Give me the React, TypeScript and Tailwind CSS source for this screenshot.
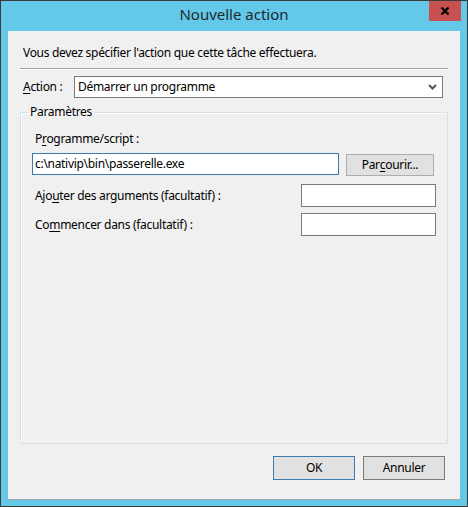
const font = "font-['Noto_Sans',_sans-serif]";

function Key({ children }: { children: string }) {
    return <span className="underline underline-offset-2">{children}</span>;
}

export default function App() {
    return (
        <div
            className={`w-[468px] h-[507px] flex flex-col bg-[#64c8e9] border border-[#3a3a3a] text-[12px] tracking-[-0.3px] text-black ${font}`}
        >
            <div className="relative h-[30px] shrink-0 flex items-center justify-center">
                <span className="text-[15px] tracking-normal text-[#1e2a2e] mb-[3px]">Nouvelle action</span>
                <div className="absolute right-[6px] top-0 w-[32px] h-[20px] bg-[#c75050] flex items-center justify-center">
                    <svg width="10" height="8" viewBox="0 0 10 8">
                        <path d="M1.5 0.5 L8.5 7.5 M8.5 0.5 L1.5 7.5" stroke="#000" strokeWidth="2.2" />
                    </svg>
                </div>
            </div>

            <div className="flex-1 mx-[7px] mb-[6px] bg-[#f0f0f0] border-b border-[#9aa6ac] flex flex-col">
                <p className="mt-[14px] ml-[15px] leading-[16px]">
                    Vous devez spécifier l'action que cette tâche effectuera.
                </p>

                <div className="mt-[7px] mx-[12px] border-t border-[#a0a0a0] border-b border-b-white" />

                <div className="mt-[6px] mx-[12px] flex items-center">
                    <span className="ml-[3px] w-[51px]">
                        <Key>A</Key>ction :
                    </span>
                    <div className="flex-1 mr-[5px] h-[22px] bg-white border border-[#7a7a7a] flex items-center justify-between pl-[3px] pr-[5px]">
                        <span>Démarrer un programme</span>
                        <svg width="9" height="6" viewBox="0 0 9 6">
                            <path d="M1 1 L4.5 4.5 L8 1" stroke="#555" strokeWidth="2" fill="none" />
                        </svg>
                    </div>
                </div>

                <fieldset className="mt-[7px] mx-[12px] h-[339px] border border-[#d5dfe5] rounded-[2px] shadow-[inset_1px_1px_0_#fff] px-[11px]">
                    <legend className="ml-[-4px] px-[2px] leading-[14px]">Paramètres</legend>

                    <div className="mt-[12px] ml-[3px] leading-[16px]">
                        P<Key>r</Key>ogramme/script :
                    </div>
                    <div className="mt-[6px] flex items-start">
                        <div className="w-[307px] h-[22px] bg-white border border-[#3c7bb0] flex items-center pl-[2px]">
                            c:\nativip\bin\passerelle.exe
                        </div>
                        <button className="ml-[7px] mt-[1px] w-[88px] h-[22px] bg-[#e1e1e1] border border-[#adadad] flex items-center justify-center">
                            Par<Key>c</Key>ourir...
                        </button>
                    </div>

                    <div className="mt-[8px] flex items-center">
                        <span className="ml-[3px] flex-1">
                            Ajo<Key>u</Key>ter des arguments (facultatif) :
                        </span>
                        <div className="w-[135px] h-[23px] bg-white border border-[#7a7a7a]" />
                    </div>

                    <div className="mt-[6px] flex items-center">
                        <span className="ml-[3px] flex-1">
                            Co<Key>m</Key>mencer dans (facultatif) :
                        </span>
                        <div className="w-[135px] h-[23px] bg-white border border-[#7a7a7a]" />
                    </div>
                </fieldset>

                <div className="mt-[12px] mr-[15px] flex justify-end gap-[8px]">
                    <button className="w-[82px] h-[24px] bg-[#e1e1e1] border border-[#3c7bb0] flex items-center justify-center">
                        OK
                    </button>
                    <button className="w-[82px] h-[24px] bg-[#e1e1e1] border border-[#7a7a7a] flex items-center justify-center">
                        Annuler
                    </button>
                </div>
            </div>
        </div>
    );
}
